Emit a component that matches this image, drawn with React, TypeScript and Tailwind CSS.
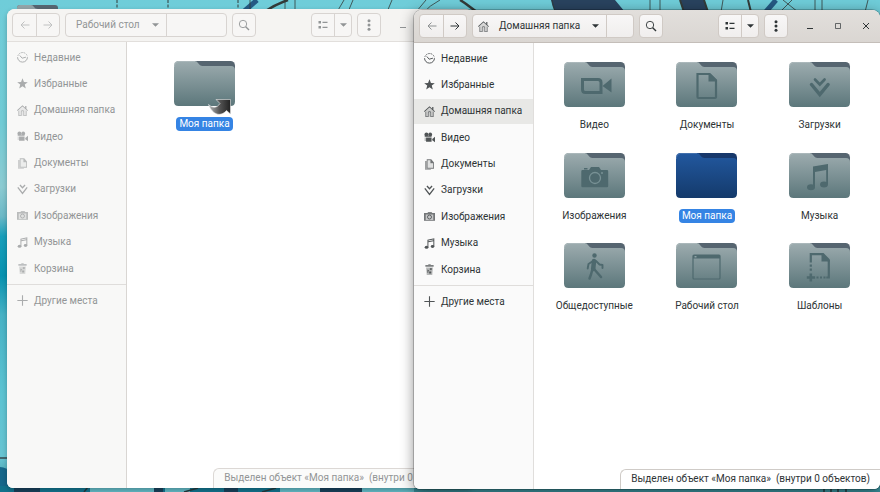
import React from "react";

type IconName =
  | "recent" | "star" | "home" | "video" | "documents" | "downloads"
  | "pictures" | "music" | "trash" | "plus";

function PlaceIcon({ name }: { name: IconName }) {
  const common = {
    viewBox: "0 0 16 16",
    className: "h-[11px] w-[11px] shrink-0",
    fill: "currentColor",
    "aria-hidden": true,
  };
  switch (name) {
    case "recent":
      return (
        <svg {...common} fill="none" stroke="currentColor" strokeWidth="1.4">
          <path d="M.8 7.500a7.200 7.200 0 0 0 14.400 0" />
          <path d="M1.300 5.500A7.200 7.200 0 0 1 15 6" strokeDasharray="2 1.400" />
          <path d="M4 5 7.500 9l5.500-1.500" />
        </svg>
      );
    case "star":
      return (
        <svg {...common}>
          <path d="m8 .4 2.1 5.3 5.6.3-4.4 3.6 1.5 5.6L8 12.1l-4.8 3.1 1.5-5.6L.3 6l5.6-.3z" />
        </svg>
      );
    case "home":
      return (
        <svg {...common}>
          <path d="M2.5 8v7.5h11V8L8 3.200z" opacity=".2" />
          <path d="M8 .4 0 7.800l.9 1L8 2.300l7.100 6.500.9-1-2.300-2.100V1.500h-1.800v2.500z" />
          <path d="M2 8.300h1.200v6.600H5.700V9.500C5.700 7 10.300 7 10.300 9.500v5.400h2.500V8.300H14V16H9.300V9.800c0-1.200-2.600-1.200-2.600 0V16H2z" opacity=".8" />
        </svg>
      );
    case "video":
      return (
        <svg {...common}>
          <circle cx="3.500" cy="3.500" r="2.800" />
          <circle cx="9" cy="3.500" r="2.800" />
          <path d="M1 5h10v2H1zM3 8h8v6H3z" />
          <path d="M1 8h1.500v5H1z" opacity=".5" />
          <path d="M16 7v8l-4-3v-2z" />
        </svg>
      );
    case "documents":
      return (
        <svg {...common}>
          <path d="M1.500 3H4v11.500h6v1H1.500z" opacity=".55" />
          <path fillRule="evenodd" d="M4 .5h6.500L14.500 5v9H4zM5.200 1.700v11.100h8.100V6.200H9.300V1.700z" opacity=".8" />
          <path d="M5.200 1.700h4.100v4.500h4v6.600H5.200z" opacity=".15" />
        </svg>
      );
    case "downloads":
      return (
        <svg {...common} fill="none" stroke="currentColor" strokeWidth="1.900">
          <path d="M4.300 1.500 8 5.500l3.700-4" />
          <path d="m1.200 5 6.800 8.800L14.800 5" />
        </svg>
      );
    case "pictures":
      return (
        <svg {...common}>
          <path d="M0 3h16v11H0z" opacity=".3" />
          <path fillRule="evenodd" d="M0 3h5l1-1.500h5L12 3h4v2.200H0zM0 5h2.500v9H0zM13.500 5H16v9h-2.500zM2.500 13h11v1h-11z" opacity=".7" />
          <circle cx="8" cy="8.800" r="2.900" fill="none" stroke="currentColor" strokeWidth="1.300" />
        </svg>
      );
    case "music":
      return (
        <svg {...common}>
          <path fillRule="evenodd" d="M5 2.500 15 .5v11.800h-1.400V4.800L6.400 6.200v7.300H5zM6.400 3.600v1.200l7.200-1.400V2.200z" />
          <ellipse cx="3.700" cy="13.600" rx="2.700" ry="2.200" />
          <ellipse cx="12.400" cy="12.300" rx="2.600" ry="2.100" />
        </svg>
      );
    case "trash":
      return (
        <svg {...common}>
          <path d="M2 1.500h4l.5-1h3l.5 1h4V4H2z" opacity=".75" />
          <path d="m3 5 1 11h8l1-11z" opacity=".4" />
          <path d="M8.500 6h3l-.5 3-1-1-1.500 1.500zM5 8l2.500 1L6 10.500l1 1L5 13zM7.500 11h3v2.800h-3z" />
        </svg>
      );
    case "plus":
      return (
        <svg {...common} fill="none" stroke="currentColor" strokeWidth="1.600">
          <path d="M8 .5v15M.5 8h15" />
        </svg>
      );
  }
}

type Emblem =
  | "none" | "video" | "document" | "download" | "camera" | "music"
  | "public" | "desktop" | "template";

function FolderEmblem({ kind }: { kind: Emblem }) {
  const ink = "#4e696e";
  switch (kind) {
    case "video":
      return (
        <g>
          <path d="M18.500 17.500H34q3 0 3 3v10H21.500q-3 0-3-3z" fill="none" stroke={ink} strokeWidth="3" />
          <path d="M38.500 24 47.500 16.500v14z" fill={ink} />
        </g>
      );
    case "document":
      return (
        <g>
          <path d="M21.500 12h12l6.500 6.500V35a1 1 0 0 1-1 1H22.500a1 1 0 0 1-1-1z" fill="none" stroke={ink} strokeWidth="2.200" />
          <path d="M32.500 11.500h2l6 6v2h-8z" fill={ink} />
        </g>
      );
    case "download":
      return (
        <g fill="none" stroke={ink} strokeLinecap="round">
          <path d="m26 17.500 4.800 5 4.800-5" strokeWidth="2.600" />
          <path d="m22.500 22.500 8.300 10 8.300-10" strokeWidth="3.500" />
        </g>
      );
    case "camera":
      return (
        <g>
          <path d="M18.500 17H25l2-3h8l2 3h6a1.200 1.200 0 0 1 1.200 1.200V33a1.200 1.200 0 0 1-1.200 1.200H18.500a1.200 1.200 0 0 1-1.200-1.200V18.200a1.200 1.200 0 0 1 1.200-1.200z" fill={ink} />
          <path d="M20 15h3.500v1.500H20z" fill={ink} />
          <circle cx="31" cy="25" r="5.500" fill={ink} stroke="#789195" strokeWidth="1.300" />
          <circle cx="38" cy="20" r="1" fill="#789195" />
        </g>
      );
    case "music":
      return (
        <g fill={ink}>
          <path d="M24 13.500 39 11v20h-1.800V17L26 19v15h-2z" />
          <ellipse cx="22" cy="34.200" rx="4" ry="3" />
          <ellipse cx="35" cy="31.500" rx="4" ry="3" />
        </g>
      );
    case "public":
      return (
        <g fill="none" stroke={ink} strokeLinecap="round" strokeLinejoin="round">
          <circle cx="30.500" cy="12.500" r="2.200" fill={ink} stroke="none" />
          <path d="m30 18-.8 8" strokeWidth="4.500" />
          <path d="m29 18-4.500 3-.8 4.500M32 18l3.500 3.500 3 .5v3" strokeWidth="1.900" />
          <path d="m28.500 26-1.500 5.500-1.500 4M30 26l3.500 4L37 34" strokeWidth="2.500" />
        </g>
      );
    case "desktop":
      return (
        <g>
          <rect x="17" y="12" width="27" height="24" rx="1" fill="none" stroke={ink} strokeWidth="1.200" />
          <path d="M17 12h27v3.500H17z" fill={ink} />
          <path d="M18.500 13h2v1.500h-2z" fill="#8fa3a6" />
        </g>
      );
    case "template":
      return (
        <g>
          <path d="M21.800 19.500v-8.400H33l6.800 7V34.500h-2.500" fill="none" stroke={ink} strokeWidth="2.200" />
          <path d="M32.500 10h2l6.400 6.500v2h-8.400z" fill={ink} />
          <path d="M20.700 21.500h2.200v2.200h-2.200zM20.700 25.500h2.200v2.200h-2.200zM27.500 33.400h2v2.200h-2zM31 33.400h2v2.200h-2zM34.500 33.400h2v2.200h-2z" fill={ink} />
          <path d="M20.500 30.500h2.600v2.700h3v2.600h-3v2.700h-2.600v-2.700h-2.700v-2.600h2.700z" fill={ink} />
        </g>
      );
    default:
      return null;
  }
}

function Folder({ emblem, selected, linked }: { emblem: Emblem; selected?: boolean; linked?: boolean }) {
  const front = selected ? "url(#folderBlue)" : "url(#folderGrey)";
  return (
    <svg viewBox="0 0 61 45" className="h-[45px] w-[61px] shrink-0 overflow-visible" aria-hidden="true">
      <rect x="1" width="60" height="42" rx="4.500" fill={selected ? "#17386b" : "#566570"} />
      <path
        d="M4.500 0H21c1.500 0 2 .8 3 2 1.500 2 2.500 3 4.500 3H57q4 0 4 4v31.500q0 4.500-4.500 4.500h-52Q0 45 0 40.500v-36Q0 0 4.500 0z"
        fill={front}
      />
      <path d="M.5 6V4.500q0-4 4-4H21" fill="none" stroke="#fff" strokeOpacity=".15" />
      <FolderEmblem kind={emblem} />
      {linked && (
        <path
          d="M42 38.500h14.500V53l-4-3.500c-5 6-13.500 5.500-18-6 4.500 4 8.500 3.500 11.500-1z"
          fill="url(#arrowInk)" stroke="#e8eaea" strokeWidth=".6"
        />
      )}
    </svg>
  );
}

function Gradients() {
  return (
    <svg className="absolute h-0 w-0" aria-hidden="true">
      <defs>
        <linearGradient id="folderGrey" x1="0" y1="0" x2="0" y2="1">
          <stop offset="0" stopColor="#9dacaf" />
          <stop offset="1" stopColor="#5c777b" />
        </linearGradient>
        <linearGradient id="folderBlue" x1="0" y1="0" x2="0" y2="1">
          <stop offset="0" stopColor="#22589f" />
          <stop offset="1" stopColor="#143a6b" />
        </linearGradient>
        <linearGradient id="arrowInk" x1="0" y1="0" x2="1" y2="0">
          <stop offset="0" stopColor="#b5b8b9" />
          <stop offset=".5" stopColor="#555" />
          <stop offset="1" stopColor="#222" />
        </linearGradient>
      </defs>
    </svg>
  );
}

const places: { icon: IconName; label: string }[] = [
  { icon: "recent", label: "Недавние" },
  { icon: "star", label: "Избранные" },
  { icon: "home", label: "Домашняя папка" },
  { icon: "video", label: "Видео" },
  { icon: "documents", label: "Документы" },
  { icon: "downloads", label: "Загрузки" },
  { icon: "pictures", label: "Изображения" },
  { icon: "music", label: "Музыка" },
  { icon: "trash", label: "Корзина" },
];

function Place({ icon, label, current, active }: { icon: IconName; label: string; current?: boolean; active: boolean }) {
  return (
    <button
      type="button"
      className={`flex h-[25px] w-full items-center gap-1.5 pl-2.5 whitespace-nowrap ${current ? "bg-[#e8e8e6]" : ""}`}
    >
      <span className={active ? "text-[#505456]" : "text-[#aaacad]"}>
        <PlaceIcon name={icon} />
      </span>
      {label}
    </button>
  );
}

function Sidebar({ active, current }: { active: boolean; current?: string }) {
  return (
    <nav
      aria-label="Места"
      className={`w-[120px] shrink-0 rounded-bl-md border-r pt-[3px] ${active ? "border-[#e0dedc] bg-[#fafafa]" : "border-[#d9d6d3] bg-[#f8f8f7]"}`}
    >
      <ul className="flex h-[236px] flex-col justify-between">
        {places.map((p) => (
          <li key={p.label}>
            <Place {...p} active={active} current={p.label === current} />
          </li>
        ))}
      </ul>
      <div className="mt-[3px] border-t border-[#dfdddb] pt-[3px]">
        <Place icon="plus" label="Другие места" active={active} />
      </div>
    </nav>
  );
}

interface FileItem {
  label: string;
  emblem: Emblem;
  selected?: boolean;
  linked?: boolean;
}

function File({ label, emblem, selected, linked }: FileItem) {
  return (
    <button type="button" className="flex flex-col items-center gap-[11px] self-start">
      <Folder emblem={emblem} selected={selected && !linked} linked={linked} />
      <span
        className={`h-[14px] rounded px-[3px] leading-[14px] whitespace-nowrap ${selected ? "bg-[#3584e4] text-white" : "text-[#2e3436]"}`}
      >
        {label}
      </span>
    </button>
  );
}

interface WindowProps {
  title: string;
  active: boolean;
  home?: boolean;
  place: string;
  gridClass: string;
  files: FileItem[];
}

function FileWindow({ title, active, home, place, gridClass, files }: WindowProps) {
  const group = active
    ? "flex h-[24px] shrink-0 overflow-hidden rounded-[4px] border border-[#d0cac5] bg-linear-to-b from-[#f8f7f7] to-[#f0eeed]"
    : "flex h-[24px] shrink-0 overflow-hidden rounded-[4px] border border-[#d8d4d1] bg-[#f7f6f5]";
  const line = active ? "border-[#d0cac5]" : "border-[#d8d4d1]";
  const dim = active ? "text-[#8e9192]" : "text-[#c0c1c1]";
  const cell = "flex items-center justify-center";
  return (
    <section
      aria-label={title}
      className={`relative flex h-full flex-col rounded-t-lg rounded-b-md bg-white text-[10px] leading-[14px] ${
        active
          ? "text-[#2e3436] shadow-[0_3px_14px_rgba(0,0,0,0.45),0_0_0_1px_rgba(0,0,0,0.2)]"
          : "text-[#929596] shadow-[0_2px_5px_rgba(0,0,0,0.25)]"
      }`}
    >
      <header
        className={`flex h-[33px] items-start gap-[5px] rounded-t-lg border-b pt-1 pl-[5px] ${
          active ? "border-[#c4beb9] bg-linear-to-b from-[#e2dfdc] to-[#dad6d2]" : "border-[#e2dfdc] bg-[#f5f4f2]"
        }`}
      >
        <div className={group}>
          <button type="button" aria-label="Назад" className={`${cell} w-[23px] ${dim}`}>
            <svg viewBox="0 0 10 10" className="h-2.5 w-2.5" fill="none" stroke="currentColor" strokeWidth="1"><path d="M9.500 5H1M4.500 1.500 1 5l3.500 3.500" /></svg>
          </button>
          <button type="button" aria-label="Вперёд" className={`${cell} w-[23px] border-l ${line} ${active ? "" : dim}`}>
            <svg viewBox="0 0 10 10" className="h-2.5 w-2.5" fill="none" stroke="currentColor" strokeWidth="1"><path d="M.5 5H9M5.500 1.500 9 5 5.500 8.500" /></svg>
          </button>
        </div>
        <div className={`${group} w-[162px]`}>
          <button type="button" className={`flex items-center border-r whitespace-nowrap ${line} ${home ? "pl-[5px]" : "pl-[10px]"} pr-[7px]`}>
            {home && <span className="mr-2.5 text-[#5b5f61]"><PlaceIcon name="home" /></span>}
            {title}
            <svg viewBox="0 0 8 4" className="ml-3 h-1 w-[7px]" fill="currentColor" aria-hidden="true"><path d="M0 0h8L4 4z" /></svg>
          </button>
        </div>
        <div className={group}>
          <button type="button" aria-label="Поиск" className={`${cell} w-[22px]`}>
            <svg viewBox="0 0 12 12" className="h-3 w-3" fill="none" stroke="currentColor" strokeWidth=".9"><circle cx="5" cy="5" r="3.700" /><path d="m7.700 7.700 3.300 3.300" strokeWidth="1.400" /></svg>
          </button>
        </div>
        <div className={`${group} ml-auto`}>
          <button type="button" aria-label="Вид списком" className={`${cell} w-[22px]`}>
            <svg viewBox="0 0 10 8" className="h-2 w-2.5" fill="currentColor"><path d="M.5 0h2.500v2.500H.500zM.500 5h2.500v2.500H.500zM4.500.800h5v1.100h-5zM4.500 5.800h5v1.100h-5z" /></svg>
          </button>
          <button type="button" aria-label="Параметры вида" className={`${cell} w-[17px] border-l ${line}`}>
            <svg viewBox="0 0 8 4" className="h-1 w-[7px]" fill="currentColor"><path d="M0 0h8L4 4z" /></svg>
          </button>
        </div>
        <div className={group}>
          <button type="button" aria-label="Меню" className={`${cell} w-[22px]`}>
            <svg viewBox="0 0 4 12" className="h-3 w-1" fill="currentColor"><circle cx="2" cy="1.700" r="1.500" /><circle cx="2" cy="6" r="1.500" /><circle cx="2" cy="10.300" r="1.500" /></svg>
          </button>
        </div>
        <div className="ml-[3px] flex h-[24px] shrink-0">
          <button type="button" aria-label="Свернуть" className={`${cell} w-7`}>
            <svg viewBox="0 0 8 8" className="h-2 w-2" fill="none" stroke="currentColor"><path d="M1 6.500h6" /></svg>
          </button>
          <button type="button" aria-label="Развернуть" className={`${cell} w-7`}>
            <svg viewBox="0 0 8 8" className="h-2 w-2" fill="none" stroke="currentColor" strokeWidth=".7"><path d="M1.500 1.500h5v5h-5z" /></svg>
          </button>
          <button type="button" aria-label="Закрыть" className={`${cell} w-7`}>
            <svg viewBox="0 0 8 8" className="h-2 w-2" fill="none" stroke="currentColor" strokeWidth="1"><path d="m1 1 6 6M7 1 1 7" /></svg>
          </button>
        </div>
      </header>
      <div className="flex min-h-0 flex-1">
        <Sidebar active={active} current={place} />
        <main className="min-w-0 flex-1 pt-[19px]">
          <div className={gridClass}>
            {files.map((f) => (
              <File key={f.label} {...f} />
            ))}
          </div>
        </main>
      </div>
      <p
        role="status"
        className={`absolute right-0 bottom-0 h-5 rounded-tl-md border-t border-l px-[10px] pt-[2px] whitespace-nowrap ${
          active ? "rounded-br-md border-[#cfcbc7] bg-white" : "border-[#dcd8d5] bg-[#fbfbfa]"
        }`}
      >
        Выделен объект «Моя папка» &nbsp;(внутри 0 объектов)
      </p>
    </section>
  );
}

function Wallpaper() {
  return (
    <svg viewBox="0 0 880 492" preserveAspectRatio="none" className="absolute inset-0 h-full w-full" aria-hidden="true">
      <defs>
        <linearGradient id="sea" x1="0" y1="0" x2="0" y2="1">
          <stop offset="0" stopColor="#6fcdd9" />
          <stop offset=".25" stopColor="#71cbd5" />
          <stop offset=".38" stopColor="#8ccbd2" />
          <stop offset=".44" stopColor="#6bb9c7" />
          <stop offset=".48" stopColor="#179fbb" />
          <stop offset=".56" stopColor="#0692b0" />
          <stop offset=".64" stopColor="#47b2c5" />
          <stop offset=".8" stopColor="#5cc3d2" />
          <stop offset=".93" stopColor="#67c4d2" />
          <stop offset="1" stopColor="#388f9b" />
        </linearGradient>
      </defs>
      <rect width="880" height="492" fill="url(#sea)" />
      <path d="M551 0h64q5 6 10 12h-70q-3-6-4-12zM680 0h24l4 12h-24z" fill="#29435f" />
      <path d="m257 0-16 14M776 0l-12 14" stroke="#245a83" strokeWidth="5" />
      <g fill="none" stroke="#333b39">
        <path d="M460 0c7 4 12 9 20 14M288 0q-12 4-24 12" strokeWidth="2.500" />
        <path d="m680 0 4 12M704 0l4 12M748 0l3 12" strokeWidth="2" />
        <path d="m344 0-7 12M353 0l-5 12M392 0l-5 12M440 0q-10 5-18 14M426 0l-10 12M552 0l3 12M783 0l15 12M650 0v12M660 0v12M815 0v12M822 0v12M868 0l-3 12M723 0l-2 12M285 0v12M295 0v12M250 0v12M780 12l12-12" strokeWidth=".8" />
        <path d="M117 0v12M168 0v12M238 0v12" strokeWidth="1" strokeDasharray="3 1.500" />
      </g>
      <path d="M0 467q7 0 10 6v19H0z" fill="#16678a" />
      <path d="M0 458h8" stroke="#36474d" strokeWidth="1.500" />
      <path d="M0 486h414v6H0z" fill="#12728c" />
      <path d="M90 486h64v6H90zM165 486h25v6h-25zM280 486h134v6H280z" fill="#62b8c4" />
      <path d="M14 486h26v6H14zM154 486h9v6h-9zM224 486h14v6h-14zM320 486h42v6h-42z" fill="#183f59" />
      <path d="M88 487l-4 5M184 492l14-4M262 492l14-4M824 488v4M831 488v4M838 488v4M846 488v4" stroke="#26393d" strokeWidth="1.500" />
      <path d="M17 12V8q0-3 3-3h35q3 0 3 3v4z" fill="#566570" />
      <path d="M17 12V8q0-3 3-3h11q2 0 3 2t4 2h20v3z" fill="#93a4a8" />
    </svg>
  );
}

const homeFiles: FileItem[] = [
  { label: "Видео", emblem: "video" },
  { label: "Документы", emblem: "document" },
  { label: "Загрузки", emblem: "download" },
  { label: "Изображения", emblem: "camera" },
  { label: "Моя папка", emblem: "none", selected: true },
  { label: "Музыка", emblem: "music" },
  { label: "Общедоступные", emblem: "public" },
  { label: "Рабочий стол", emblem: "desktop" },
  { label: "Шаблоны", emblem: "template" },
];

export default function App() {
  return (
    <div className="relative h-screen overflow-hidden bg-[#6fcdd9] font-['Roboto','Noto_Sans',sans-serif]">
      <Wallpaper />
      <Gradients />
      <div className="absolute top-[9px] right-[407px] bottom-1 left-[7px]">
        <FileWindow
          title="Рабочий стол"
          active={false}
          place=""
          gridClass="flex pl-[47px]"
          files={[{ label: "Моя папка", emblem: "none", selected: true, linked: true }]}
        />
      </div>
      <div className="absolute top-[10px] right-0 bottom-[3px] left-[414px]">
        <FileWindow
          title="Домашняя папка"
          active
          home
          place="Домашняя папка"
          gridClass="grid h-[272px] grid-cols-3 grid-rows-3 px-1"
          files={homeFiles}
        />
      </div>
    </div>
  );
}
